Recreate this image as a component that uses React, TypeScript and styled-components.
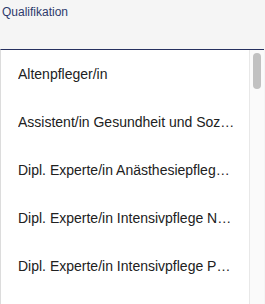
import React from "react";
import styled, {createGlobalStyle} from "styled-components";

const GlobalStyle = createGlobalStyle`
    html, body{
        margin: 0;
        padding: 0;
        background: #f5f5f5;
        font-family: "Liberation Sans", Arial, Helvetica, sans-serif;
    }
`

const Field = styled.div`
    width: 265px;
    height: 304px;
    display: flex;
    flex-direction: column;
    background: #f5f5f5;
    overflow: hidden;
`

const Label = styled.label`
    display: block;
    padding: 5px 0 0 2px;
    height: 49px;
    box-sizing: border-box;
    font-size: 12px;
    line-height: 14px;
    color: #2d3a6c;
`

const Panel = styled.div`
    flex: 1;
    display: flex;
    width: 264px;
    min-height: 0;
    background: #fff;
    border-top: 1px solid #26305f;
    border-left: 1px solid #dcdcdc;
    box-sizing: border-box;
`

const Menu = styled.ul`
    list-style: none;
    margin: 0;
    padding: 0;
    flex: 1;
    min-width: 0;
    overflow: hidden;
`

const Option = styled.li`
    height: 48px;
    display: flex;
    align-items: center;
    padding: 0 13px 0 17px;
    font-size: 14px;
    color: #212121;
    cursor: pointer;

    span{
        overflow: hidden;
        white-space: nowrap;
        text-overflow: ellipsis;
    }
`

const ScrollTrack = styled.div`
    width: 15px;
    flex: none;
    box-sizing: border-box;
    padding: 3px 3px 0 3px;
    background: #fafafa;
    border-left: 1px solid #e8e8e8;
`

const ScrollThumb = styled.div<{$size: number}>`
    height: ${p => p.$size}px;
    border-radius: 4px;
    background: #c1c1c1;
`

const qualifications = [
    "Altenpfleger/in",
    "Assistent/in Gesundheit und Soziales EBA",
    "Dipl. Experte/in Anästhesiepflege NDS HF",
    "Dipl. Experte/in Intensivpflege NDS HF",
    "Dipl. Experte/in Intensivpflege Pädiatrie",
    "Dipl. Experte/in Notfallpflege NDS HF",
    "Dipl. Hebamme FH",
    "Dipl. Pflegefachfrau/-mann HF",
    "Dipl. Pflegefachfrau/-mann FH",
    "Dipl. Pflegefachfrau/-mann DN II",
    "Fachfrau/-mann Gesundheit EFZ",
    "Pflegeassistent/in",
    "Pflegehelfer/in SRK",
]

const App = ()=>{
    return(
        <>
            <GlobalStyle/>
            <Field>
                <Label>Qualifikation</Label>
                <Panel>
                    <Menu role="listbox">
                        {qualifications.map((q)=>(
                            <Option key={q} role="option"><span>{q}</span></Option>
                        ))}
                    </Menu>
                    <ScrollTrack>
                        <ScrollThumb $size={36}/>
                    </ScrollTrack>
                </Panel>
            </Field>
        </>
    )
}

export default App
